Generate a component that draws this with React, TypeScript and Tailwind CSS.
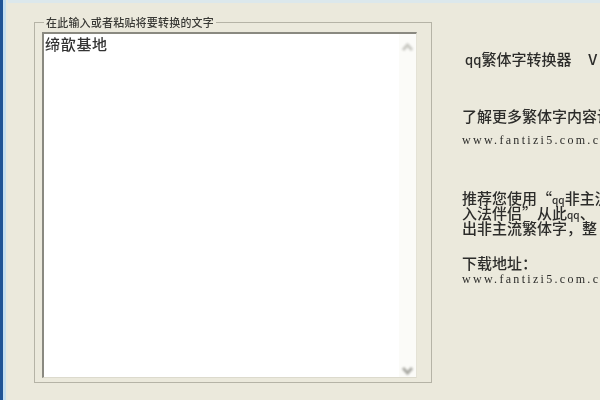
import React from 'react';

const cjk = "font-['SimSun','Noto_Sans_CJK_SC','Liberation_Sans',sans-serif]";

const App = () => {
    return (
        <div className={`flex h-[400px] w-[600px] overflow-hidden bg-[#ebe9dc] text-[#2c2c2a] ${cjk}`}>
            {/* window edge */}
            <div className="w-[3px] shrink-0 bg-[#1f5496]" />
            <div className="w-[3px] shrink-0 bg-[#c4dff0]" />
            <div className="w-[2px] shrink-0 bg-[#e6e9e0]" />

            <div className="flex min-w-0 flex-1 flex-col">
                <div className="h-[3px] shrink-0 bg-[#dce8ec]" />
                <div className="flex min-h-0 flex-1 pl-[26px] pt-[12px]">
                    {/* left group box */}
                    <fieldset className="flex h-[368px] w-[398px] shrink-0 flex-col border border-[#b5b3a6] pb-[4px] pl-[7px] pr-[14px] pt-[3px]">
                        <legend className="ml-[2px] whitespace-nowrap px-[2px] text-[11px] font-medium leading-[14px] tracking-[0.2px] text-[#3a3a36] blur-[0.5px]">
                            在此输入或者粘贴将要转换的文字
                        </legend>
                        <div className="flex min-h-0 flex-1 border-t-2 border-l-2 border-t-[#8a8980] border-l-[#8a8980] border-r border-b border-r-[#e4e2d6] border-b-[#dcdacd] bg-white">
                            <div className="flex-1 pl-[1px] pt-[2px] text-[15px] font-medium leading-[15px] tracking-[0.7px] text-[#333] blur-[0.6px]">
                                缔歆基地
                            </div>
                            <div className="flex w-[17px] shrink-0 flex-col items-center justify-between bg-[#fbfbf8] pb-[1px] pt-[8px]">
                                <svg width="13" height="10" viewBox="0 0 13 10" className="blur-[1px]">
                                    <path d="M2 8 L6.5 3 L11 8" fill="none" stroke="#c8c8c2" strokeWidth="3" />
                                </svg>
                                <svg width="13" height="10" viewBox="0 0 13 10" className="blur-[1px]">
                                    <path d="M2 2 L6.5 7 L11 2" fill="none" stroke="#a8a8a2" strokeWidth="3" />
                                </svg>
                            </div>
                        </div>
                    </fieldset>

                    {/* right info column */}
                    <div className="ml-[30px] flex min-w-0 flex-1 flex-col whitespace-nowrap text-[15px] font-medium leading-[15px] blur-[0.6px]">
                        <p className="ml-[3px] mt-[36px] h-[14px]">
                            <span className="text-[13px] leading-[0]">qq</span>繁体字转换器&nbsp;&nbsp;&nbsp;&nbsp;&nbsp;V
                        </p>
                        <p className="mt-[43px]">了解更多繁体字内容请</p>
                        <p className="mt-[11px] font-['Liberation_Serif',serif] text-[12px] leading-[12px] tracking-[2.3px]">www.fantizi5.com.c</p>
                        <p className="mt-[44px] h-[15px]">推荐您使用“<span className="text-[10px] leading-[0]">qq</span>非主流</p>
                        <p className="h-[15px]">入法伴侣”从此<span className="text-[10px] leading-[0]">qq</span>、</p>
                        <p className="h-[15px]">出非主流繁体字，整</p>
                        <p className="mt-[20px]">下载地址：</p>
                        <p className="mt-[3px] font-['Liberation_Serif',serif] text-[12px] leading-[12px] tracking-[2.3px]">www.fantizi5.com.c</p>
                    </div>
                </div>
            </div>
        </div>
    );
};

export default App;
